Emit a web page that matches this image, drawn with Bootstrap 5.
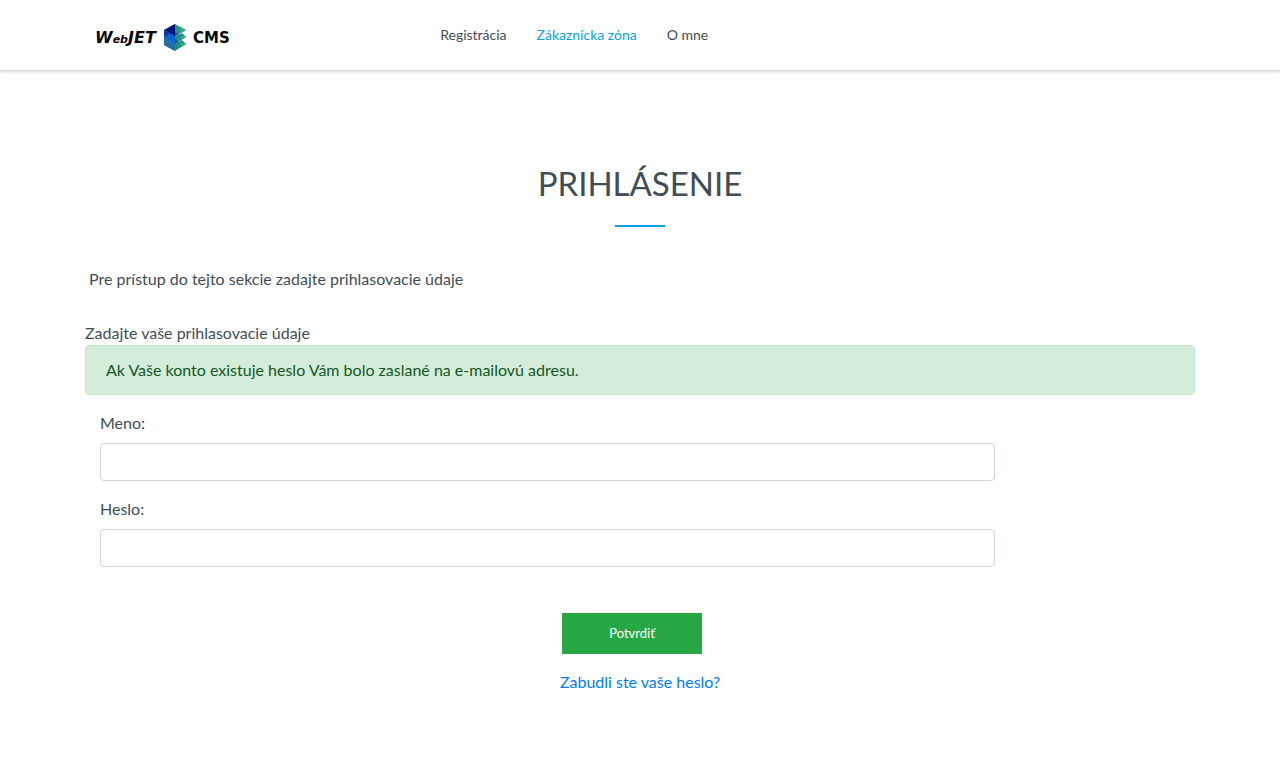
<!DOCTYPE html>
<html lang="sk">
<head>
<meta charset="utf-8">
<meta name="viewport" content="width=device-width, initial-scale=1">
<title>Prihlásenie</title>
<link rel="stylesheet" href="https://cdn.jsdelivr.net/npm/bootstrap@5.3.0/dist/css/bootstrap.min.css">
<style>
body { font-family: Lato, "Open Sans", sans-serif; font-size: 16px; line-height: 24px; color: #3f4d56; }
.container { --bs-gutter-x: 30px; }
.site-header { height: 71px; border-bottom: 1px solid #dcdcdc; box-shadow: 0 1px 3px rgba(0,0,0,.16); }
.brand-area { flex: 0 0 32%; padding: 12px 0 0 10px; }
.site-nav { --bs-nav-link-color: #3f4d56; --bs-nav-link-hover-color: #0aa4dc; gap: 30px; font-size: 14px; line-height: 20px; }
.site-nav .nav-link.active { color: #0aa4dc; }
.login { padding-top: 87px; }
.login h1 { font-size: 33px; line-height: 50px; font-weight: 400; color: #3f4d56; }
.title-rule { width: 50px; height: 2px; margin: 17px auto 40px; background: #03a0e6; }
.intro { padding-left: 4px; margin-bottom: 30px; }
.alert-success { --bs-alert-color: #155724; --bs-alert-bg: #d4edda; --bs-alert-border-color: #c3e6cb; --bs-alert-border-radius: 4px; padding: 12px 20px; }
.field-col { padding: 0 15px; }
.form-label { margin-bottom: 8px; }
.form-control { height: 38px; border-color: #ced4da; border-radius: 4px; }
.submit-row { padding: 30px 16px 16px 0; }
.btn-submit { --bs-btn-bg: #28a745; --bs-btn-color: #fff; --bs-btn-hover-bg: #218838; --bs-btn-hover-color: #fff; --bs-btn-font-size: 13px; --bs-btn-border-radius: 0; width: 140px; height: 41px; border: 0; }
.forgot { color: #007bff; }
</style>
</head>
<body>
<header class="site-header bg-white">
  <div class="container h-100 d-flex align-items-center">
    <div class="brand-area">
      <a class="d-inline-block" href="#" aria-label="WebJET CMS">
        <svg class="d-block" width="136" height="28" viewBox="0 0 136 28" font-family="DejaVu Sans, sans-serif" font-weight="700" fill="#080808">
          <text x="0" y="19" font-size="16" font-style="italic">W<tspan font-size="11">eb</tspan>JET</text>
          <path d="M69 6 80 0 91 6 80 12Z" fill="#27958a"/>
          <path d="M69 13V6L80 12V20Z" fill="#073aae"/>
          <path d="M80 12V0L69 6Z" fill="#06137d"/>
          <path d="M80 12 87 9 91 13 80 20Z" fill="#218c83"/>
          <path d="M69 13 75 10 80 13V20Z" fill="#0b62d4"/>
          <path d="M80 20 87 16 91 20 80 27 69 21V13Z" fill="#238e83"/>
          <path d="M69 13 80 20V27L69 21Z" fill="#236caa"/>
          <path d="M80 8 84 10 80 12ZM80 15 84 18 80 20Z" fill="#126278"/>
          <path d="M85 3 91 6 86 9ZM86 11 91 13 86 16ZM86 18 91 20 85 24Z" fill="#35ad78"/>
          <text x="98" y="19" font-size="15">CMS</text>
        </svg>
      </a>
    </div>
    <nav class="nav site-nav">
      <a class="nav-link p-0" href="#">Registrácia</a>
      <a class="nav-link p-0 active" href="#" aria-current="page">Zákaznícka zóna</a>
      <a class="nav-link p-0" href="#">O mne</a>
    </nav>
  </div>
</header>
<main class="container login">
  <h1 class="text-center text-uppercase mb-0">Prihlásenie</h1>
  <div class="title-rule"></div>
  <p class="intro">Pre prístup do tejto sekcie zadajte prihlasovacie údaje</p>
  <p class="mb-0">Zadajte vaše prihlasovacie údaje</p>
  <div class="alert alert-success mb-3" role="alert">Ak Vaše konto existuje heslo Vám bolo zaslané na e-mailovú adresu.</div>
  <form>
    <div class="col-10 field-col mb-3">
      <label class="form-label" for="meno">Meno:</label>
      <input class="form-control" type="text" id="meno">
    </div>
    <div class="col-10 field-col mb-3">
      <label class="form-label" for="heslo">Heslo:</label>
      <input class="form-control" type="password" id="heslo">
    </div>
    <div class="submit-row text-center"><button class="btn btn-submit" type="submit">Potvrdiť</button></div>
    <p class="text-center"><a class="forgot text-decoration-none" href="#">Zabudli ste vaše heslo?</a></p>
  </form>
</main>
<script src="https://cdn.jsdelivr.net/npm/bootstrap@5.3.0/dist/js/bootstrap.bundle.min.js"></script>
</body>
</html>
